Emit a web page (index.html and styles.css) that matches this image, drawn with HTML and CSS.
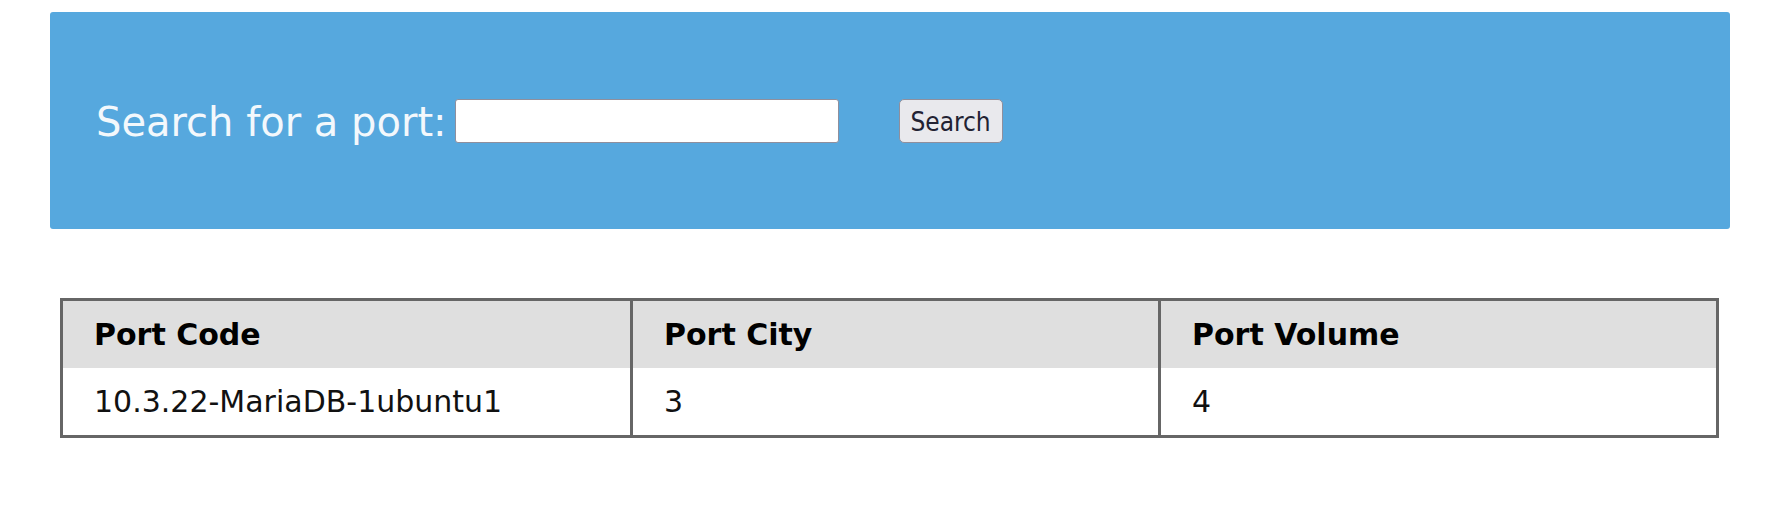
FILE: index.html
```html
<!DOCTYPE html>
<html>
<head>
<meta charset="utf-8">
<link rel="stylesheet" href="styles.css">
</head>
<body>
<div class="page">
  <form class="search-panel">
    <label class="search-label" for="port">Search for a port:</label>
    <input class="search-input" id="port" type="text">
    <button class="search-btn" type="button">Search</button>
  </form>
  <table class="ports">
    <colgroup>
      <col class="col-code">
      <col class="col-city">
      <col class="col-volume">
    </colgroup>
    <thead>
      <tr><th>Port Code</th><th>Port City</th><th>Port Volume</th></tr>
    </thead>
    <tbody>
      <tr><td>10.3.22-MariaDB-1ubuntu1</td><td>3</td><td>4</td></tr>
    </tbody>
  </table>
</div>
</body>
</html>
```
FILE: styles.css
```css
html, body {
  margin: 0;
  padding: 0;
  background: #ffffff;
}
body {
  font-family: "DejaVu Sans", "Noto Sans", sans-serif;
  color: #111111;
}
.page {
  padding-top: 12px;
}
.search-panel {
  margin: 0 42px 0 50px;
  height: 217px;
  box-sizing: border-box;
  background: #56a8de;
  border-radius: 3px;
  display: flex;
  align-items: center;
  padding-left: 46px;
}
.search-label {
  font-size: 40px;
  line-height: 1;
  color: #f3f8fc;
  padding-top: 2px;
}
.search-input {
  margin: 0 0 0 8px;
  width: 384px;
  height: 44px;
  box-sizing: border-box;
  border: 1px solid #8f8f9d;
  border-radius: 3px;
  background: #ffffff;
  padding: 0 6px;
}
.search-btn {
  margin: 0 0 0 60px;
  width: 104px;
  height: 44px;
  box-sizing: border-box;
  background: #e9e9ed;
  border: 1px solid #8f8f9d;
  border-radius: 5px;
  font-family: "DejaVu Sans Condensed", "DejaVu Sans", sans-serif;
  font-stretch: condensed;
  font-size: 26px;
  color: #222233;
  padding: 3px 0 0;
}
.ports {
  margin: 69px 0 0 60px;
  width: 1659px;
  border-collapse: collapse;
  table-layout: fixed;
  border: 3px solid #666666;
}
.col-code { width: 570px; }
.col-city { width: 528px; }
.ports th,
.ports td {
  border-left: 3px solid #666666;
  border-right: 3px solid #666666;
  padding: 0 31px;
  height: 67px;
  text-align: left;
  vertical-align: middle;
  font-size: 30px;
  line-height: 34px;
}
.ports th {
  background: #dfdfdf;
  font-weight: bold;
  color: #000000;
}
.ports td {
  background: #ffffff;
  font-weight: normal;
}
```
